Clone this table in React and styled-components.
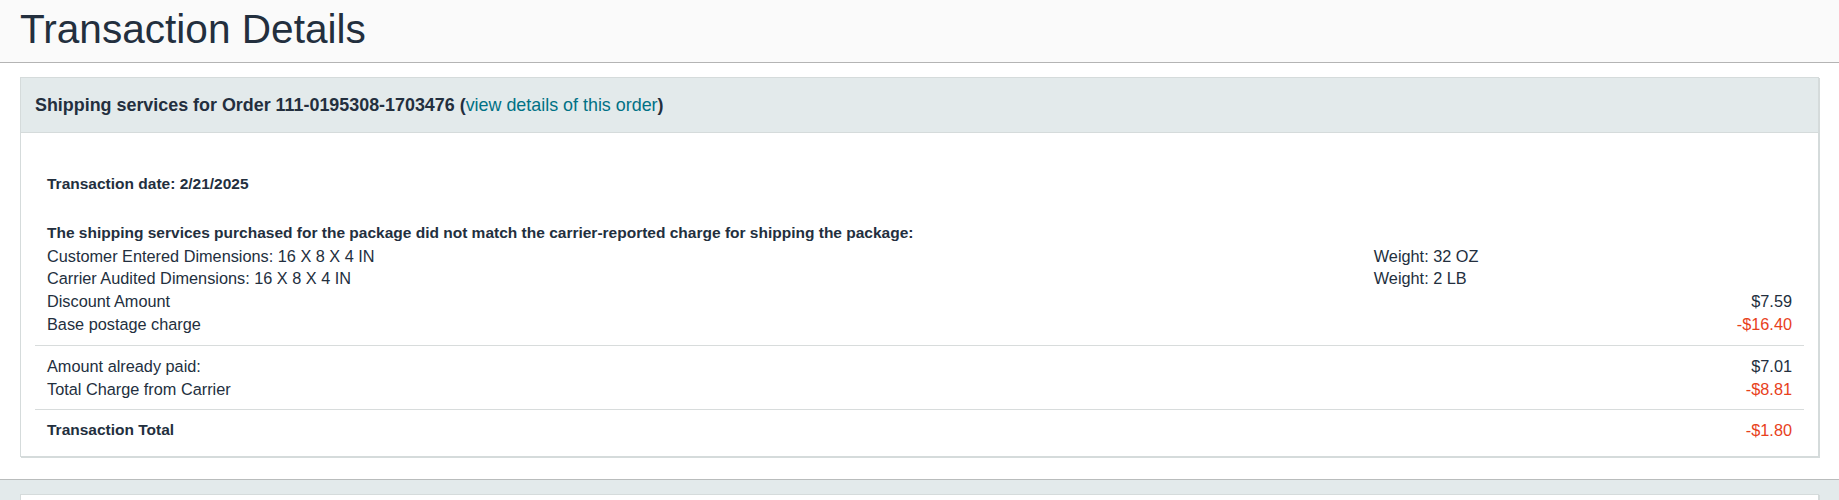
import React from "react";
import styled, { createGlobalStyle } from "styled-components";

const GlobalStyle = createGlobalStyle`
  html, body {
    margin: 0;
    padding: 0;
    background: #ffffff;
    font-family: "Liberation Sans", Arial, sans-serif;
    color: #232f3e;
  }
  * { box-sizing: border-box; }
`;

const Header = styled.header`
  height: 63px;
  background: #fafafa;
  border-bottom: 1px solid #b4b4b4;
  padding: 0 20px;
`;

const Title = styled.h1`
  margin: 0;
  font-size: 40.6px;
  font-weight: 400;
  line-height: 58px;
  letter-spacing: 0;
  color: #232f3e;
`;

const Section = styled.section`
  padding: 14px 20px 22px;
  background: ${(p) => (p.$tinted ? "#e3eaeb" : "#ffffff")};
  border-top: ${(p) => (p.$tinted ? "1px solid #b9bcbc" : "none")};
`;

const Panel = styled.div`
  background: #ffffff;
  border: 1px solid #d5dbdb;
  box-shadow: 1px 1px 0 #d5dbdb;
  min-height: ${(p) => p.$minHeight || "auto"};
`;

const PanelHeader = styled.div`
  background: #e3eaeb;
  border-bottom: 1px solid #d5dbdb;
  padding: 15px 14px;
  font-size: 17.9px;
  line-height: 24px;
  font-weight: 700;
  color: #232f3e;
`;

const Link = styled.a`
  color: #007185;
  font-weight: 400;
  text-decoration: none;
  cursor: pointer;
`;

const PanelBody = styled.div`
  padding: 14px 14px 14px;
`;

const Group = styled.div`
  padding: ${(p) => p.$pad || "9px 0"};
  border-top: ${(p) => (p.$divider ? "1px solid #d8dcdc" : "none")};
`;

const Row = styled.div`
  display: grid;
  grid-template-columns: 75% 1fr 1fr;
  font-size: 16.3px;
  line-height: 22.8px;
  color: #232f3e;
`;

const Cell = styled.div`
  padding: 0 12px;
  white-space: nowrap;
  text-align: ${(p) => (p.$right ? "right" : "left")};
  grid-column: ${(p) => p.$span || "auto"};
  font-weight: ${(p) => (p.$bold ? 700 : 400)};
  font-size: ${(p) => (p.$bold ? "15.5px" : "inherit")};
  color: ${(p) => (p.$negative ? "#e8411c" : "inherit")};
`;

const Spacer = styled.div`
  height: ${(p) => p.$h}px;
`;

function Amount({ value }) {
  const negative = value.startsWith("-");
  return (
    <Cell $right $negative={negative}>
      {value}
    </Cell>
  );
}

export default function App() {
  return (
    <>
      <GlobalStyle />
      <Header>
        <Title>Transaction Details</Title>
      </Header>
      <Section>
        <Panel>
          <PanelHeader>
            Shipping services for Order 111-0195308-1703476 (
            <Link>view details of this order</Link>)
          </PanelHeader>
          <PanelBody>
            <Group $pad="26px 0 0">
              <Row>
                <Cell $bold $span="1 / 4">Transaction date: 2/21/2025</Cell>
              </Row>
              <Spacer $h={26} />
              <Row>
                <Cell $bold $span="1 / 4">
                  The shipping services purchased for the package did not match the
                  carrier-reported charge for shipping the package:
                </Cell>
              </Row>
              <Row>
                <Cell>Customer Entered Dimensions: 16 X 8 X 4 IN</Cell>
                <Cell>Weight: 32 OZ</Cell>
                <Cell />
              </Row>
              <Row>
                <Cell>Carrier Audited Dimensions: 16 X 8 X 4 IN</Cell>
                <Cell>Weight: 2 LB</Cell>
                <Cell />
              </Row>
              <Row>
                <Cell>Discount Amount</Cell>
                <Cell />
                <Amount value="$7.59" />
              </Row>
              <Row>
                <Cell>Base postage charge</Cell>
                <Cell />
                <Amount value="-$16.40" />
              </Row>
              <Spacer $h={9} />
            </Group>
            <Group $divider>
              <Row>
                <Cell>Amount already paid:</Cell>
                <Cell />
                <Amount value="$7.01" />
              </Row>
              <Row>
                <Cell>Total Charge from Carrier</Cell>
                <Cell />
                <Amount value="-$8.81" />
              </Row>
            </Group>
            <Group $divider $pad="9px 0 0">
              <Row>
                <Cell $bold>Transaction Total</Cell>
                <Cell />
                <Amount value="-$1.80" />
              </Row>
            </Group>
          </PanelBody>
        </Panel>
      </Section>
      <Section $tinted>
        <Panel $minHeight="120px" />
      </Section>
    </>
  );
}
